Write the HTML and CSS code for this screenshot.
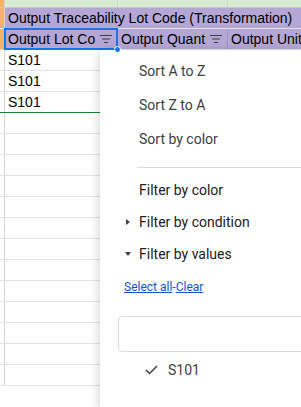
FILE: index.html
```html
<!DOCTYPE html>
<html lang="en">
<head>
    <meta charset="UTF-8" />
    <meta name="viewport" content="width=device-width, initial-scale=1.0"/>
    <title>Filter menu</title>
    <link rel="stylesheet" href="styles.css">
</head>
<body>

    <div class="sheet">
        <div class="row row-top">
            <div class="gutter orange"></div>
            <div class="cell col-a green"></div>
            <div class="cell col-b green"></div>
            <div class="cell col-c green"></div>
        </div>
        <div class="row">
            <div class="gutter orange"></div>
            <div class="cell span purple">Output Traceability Lot Code (Transformation)</div>
        </div>
        <div class="row">
            <div class="gutter orange"></div>
            <div class="cell col-a purple head selected">
                <span class="label">Output Lot Co</span>
                <svg class="filter-icon" width="12" height="8" viewBox="0 0 12 8"><path d="M0 0.5h12M2 4h8M4 7.5h4" stroke="#3c4043" stroke-width="1.2" fill="none"/></svg>
            </div>
            <div class="cell col-b purple head">
                <span class="label">Output Quant</span>
                <svg class="filter-icon" width="12" height="8" viewBox="0 0 12 8"><path d="M0 0.5h12M2 4h8M4 7.5h4" stroke="#3c4043" stroke-width="1.2" fill="none"/></svg>
            </div>
            <div class="cell col-c purple head">
                <span class="label">Output Unit</span>
            </div>
        </div>
        <div class="row"><div class="gutter"></div><div class="cell col-a">S101</div><div class="cell col-b"></div><div class="cell col-c"></div></div>
        <div class="row"><div class="gutter"></div><div class="cell col-a">S101</div><div class="cell col-b"></div><div class="cell col-c"></div></div>
        <div class="row last-data"><div class="gutter"></div><div class="cell col-a">S101</div><div class="cell col-b"></div><div class="cell col-c"></div></div>
        <div class="row"><div class="gutter"></div><div class="cell col-a"></div><div class="cell col-b"></div><div class="cell col-c"></div></div>
        <div class="row"><div class="gutter"></div><div class="cell col-a"></div><div class="cell col-b"></div><div class="cell col-c"></div></div>
        <div class="row"><div class="gutter"></div><div class="cell col-a"></div><div class="cell col-b"></div><div class="cell col-c"></div></div>
        <div class="row"><div class="gutter"></div><div class="cell col-a"></div><div class="cell col-b"></div><div class="cell col-c"></div></div>
        <div class="row"><div class="gutter"></div><div class="cell col-a"></div><div class="cell col-b"></div><div class="cell col-c"></div></div>
        <div class="row"><div class="gutter"></div><div class="cell col-a"></div><div class="cell col-b"></div><div class="cell col-c"></div></div>
        <div class="row"><div class="gutter"></div><div class="cell col-a"></div><div class="cell col-b"></div><div class="cell col-c"></div></div>
        <div class="row"><div class="gutter"></div><div class="cell col-a"></div><div class="cell col-b"></div><div class="cell col-c"></div></div>
        <div class="row"><div class="gutter"></div><div class="cell col-a"></div><div class="cell col-b"></div><div class="cell col-c"></div></div>
        <div class="row"><div class="gutter"></div><div class="cell col-a"></div><div class="cell col-b"></div><div class="cell col-c"></div></div>
        <div class="row"><div class="gutter"></div><div class="cell col-a"></div><div class="cell col-b"></div><div class="cell col-c"></div></div>
        <div class="row"><div class="gutter"></div><div class="cell col-a"></div><div class="cell col-b"></div><div class="cell col-c"></div></div>
        <div class="row"><div class="gutter"></div><div class="cell col-a"></div><div class="cell col-b"></div><div class="cell col-c"></div></div>
    </div>

    <!-- selection handle -->
    <div class="handle"></div>

    <!-- filter dropdown -->
    <div class="filter-menu">
        <div class="menu-section sort">
            <div class="menu-item">Sort A to Z</div>
            <div class="menu-item">Sort Z to A</div>
            <div class="menu-item">Sort by color</div>
        </div>
        <div class="separator"></div>
        <div class="menu-section">
            <div class="menu-item filter">Filter by color</div>
            <div class="menu-item filter"><span class="arrow arrow-right"></span>Filter by condition</div>
            <div class="menu-item filter"><span class="arrow arrow-down"></span>Filter by values</div>
        </div>
        <div class="links"><a href="#">Select all</a>-<a href="#">Clear</a></div>
        <div class="search-box"></div>
        <div class="value-row">
            <svg class="check" width="13" height="10" viewBox="0 0 13 10"><path d="M1 5l3.5 3.5L12 1" stroke="#3c4043" stroke-width="1.5" fill="none"/></svg>
            <span>S101</span>
        </div>
    </div>

</body>
</html>
```

FILE: styles.css
```css
body {
    margin: 0;
    background-color: #ffffff;
    font-family: 'Liberation Sans', Arial, sans-serif;
    overflow: hidden;
}

.sheet {
    display: flex;
    flex-direction: column;
    width: 301px;
    height: 407px;
    overflow: hidden;
}

.row {
    display: flex;
    height: 21px;
    flex-shrink: 0;
    box-sizing: border-box;
    border-bottom: 1px solid #e2e3e3;
}

.row-top {
    height: 8px;
    border-bottom-color: #c8c8c8;
}

.last-data {
    border-bottom: 1px solid #188038; /* filtre aralığının sonu */
}

.gutter {
    width: 4px;
    flex-shrink: 0;
    border-right: 1px solid #d6d6d6;
}

.cell {
    box-sizing: border-box;
    font-size: 14px;
    line-height: 20px;
    padding-left: 3px;
    color: #000;
    white-space: nowrap;
    overflow: hidden;
    border-right: 1px solid #e2e3e3;
    flex-shrink: 0;
}

.col-a {
    width: 113px;
}

.col-b {
    width: 110px;
}

.col-c {
    flex: 1;
    flex-shrink: 1;
    border-right: none;
}

.span {
    flex: 1;
    border-right: none;
}

.orange {
    background-color: #f6b26b;
}

.green {
    background-color: #d9ead3;
    border-right-color: #c8d8c4;
}

.purple {
    background-color: #b4a7d6;
    border-right-color: #a195c4;
}

.head {
    display: flex;
    align-items: center;
    padding-right: 5px;
}

.head .label {
    flex: 1;
    white-space: nowrap;
}

.filter-icon {
    flex-shrink: 0;
    margin-left: 2px;
}

.selected {
    position: relative;
    overflow: visible;
}

.selected::after {
    content: '';
    position: absolute;
    left: -1px;
    top: -1px;
    right: -1px;
    bottom: -1px;
    border: 2px solid #1a73e8;
    pointer-events: none;
}

.handle {
    position: absolute;
    left: 114px;
    top: 46px;
    width: 5px;
    height: 5px;
    border-radius: 50%;
    background-color: #1a73e8;
    border: 1px solid #ffffff;
    z-index: 3;
}

.filter-menu {
    position: absolute;
    left: 100px;
    top: 50px;
    width: 201px;
    height: 357px;
    overflow: hidden;
    background-color: #ffffff;
    box-shadow: 0 2px 10px rgba(0, 0, 0, 0.22);
    font-family: Roboto, 'Liberation Sans', sans-serif;
    font-size: 14px;
    color: #3c4043;
    padding-top: 4px;
    box-sizing: border-box;
    z-index: 2;
}

.menu-item {
    display: flex;
    align-items: center;
    height: 34px;
    padding-left: 39px;
    position: relative;
}

.menu-item.filter {
    height: 32px;
    color: #202124;
}

.separator {
    height: 1px;
    background-color: #dadce0;
    margin: 11px -10px 6px 37px;
}

.arrow {
    position: absolute;
    left: 26px;
    width: 0;
    height: 0;
}

.arrow-right {
    border-top: 3.5px solid transparent;
    border-bottom: 3.5px solid transparent;
    border-left: 4px solid #3c4043;
}

.arrow-down {
    left: 25px;
    border-left: 3.5px solid transparent;
    border-right: 3.5px solid transparent;
    border-top: 4px solid #3c4043;
}

.links {
    margin-top: 9px;
    height: 16px;
    line-height: 16px;
    padding-left: 24px;
    font-size: 12px;
    color: #1155cc;
}

.links a {
    color: #1155cc;
}

.search-box {
    margin: 21px -10px 0 18px;
    height: 36px;
    box-sizing: border-box;
    border: 1px solid #dadce0;
    border-radius: 4px;
}

.value-row {
    display: flex;
    align-items: center;
    height: 36px;
    padding-left: 45px;
    gap: 10px;
    color: #3c4043;
}
```
